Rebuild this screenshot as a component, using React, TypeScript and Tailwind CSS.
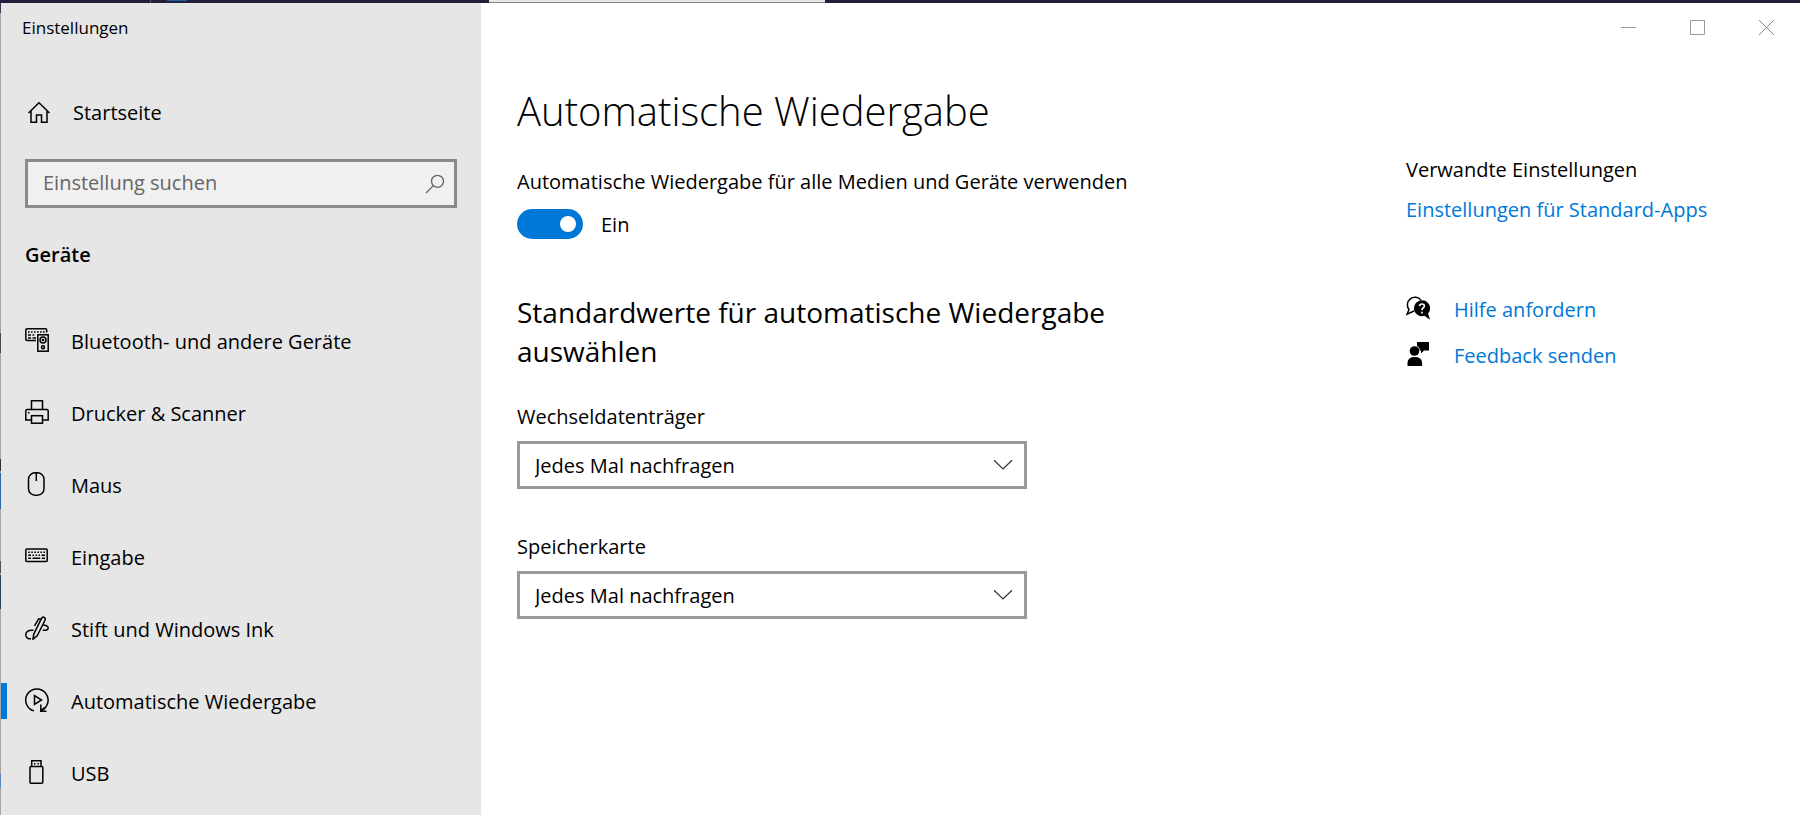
import React, { useState } from 'react';

type IconProps = { children: React.ReactNode };

const Icon: React.FC<IconProps> = ({ children }) => (
  <svg width="24" height="24" viewBox="0 0 24 24" fill="none" stroke="#000" strokeWidth="1.5" className="shrink-0" aria-hidden="true">
    {children}
  </svg>
);

const HomeIcon = () => (
  <Icon>
    <path d="M1.5 12 12 1.8 22.500 12M4 10.200V21.300H9.500V14H14.500V21.300H20V10.200" />
  </Icon>
);

const DevicesIcon = () => (
  <Icon>
    <path d="M11 12.500H2Q.8 12.500.8 11.300V2Q.8.800 2 .800H20.500Q21.700.800 21.700 2V4.500" />
    <path d="M3 4H20" strokeWidth="1.600" strokeDasharray="1.600 1.400" />
    <path d="M3 7H6M7.500 7H9.300M3 10H6M7.500 10H11" strokeWidth="1.400" />
    <rect x="12.800" y="6.800" width="10.400" height="16.400" />
    <circle cx="18" cy="12" r="3" />
    <circle cx="18" cy="12" r=".6" />
    <circle cx="18" cy="19.300" r="1.500" />
  </Icon>
);

const PrinterIcon = () => (
  <Icon>
    <path d="M6.500 9.500V.8H17.500V9.500M6.500 20H.8V11Q.8 9.600 2.200 9.600H21.800Q23.200 9.600 23.200 11V20H17.500" />
    <rect x="6.500" y="15.700" width="11" height="7.500" />
    <path d="M3 12.700H4.500" />
  </Icon>
);

const MouseIcon = () => (
  <Icon>
    <rect x="3.500" y=".8" width="15.500" height="22.400" rx="6.500" />
    <path d="M11.300 1V9" />
  </Icon>
);

const KeyboardIcon = () => (
  <Icon>
    <rect x=".8" y="5" width="21.400" height="12.500" rx="1" />
    <path d="M3.200 8.300H20" strokeWidth="1.600" strokeDasharray="1.600 1.450" />
    <path d="M3.200 11.200H6M7.500 11.200H9M10.500 11.200H12M13.500 11.200H15M16.500 11.200H20M3.200 14.200H6M7.500 14.200H15.200M16.800 14.200H20" />
  </Icon>
);

const PenIcon = () => (
  <Icon>
    <path d="M8 23.200 8.700 18.300 16.500 2.300Q17.500.6 19.200 1.400 20.900 2.300 20 4.200L12.200 19.800ZM16 3.200 13.700 2.800 9.500 9.800M8.500 14.300C3.500 13.500.8 16 .8 18.800.8 21.300 2.800 23 6 22.800M18.500 9.300C21 9 23.200 10 23.200 12 23.200 14 21 14.500 17.800 14" />
  </Icon>
);

const AutoplayIcon = () => (
  <Icon>
    <path d="M9 22.900A11.200 11.200 0 1 1 16.500 22.300" />
    <path d="M15.800 16.500V23.200H21.500M16 23 19.500 19.500" />
    <path d="M9.500 7.500V16.500L16.500 12Z" />
  </Icon>
);

const UsbIcon = () => (
  <Icon>
    <path d="M6.700 6.500V.8H16V6.500" />
    <rect x="5" y="6.500" width="12.800" height="16.700" rx="1" />
    <path d="M9 3.700H10.500M12.500 3.700H14" />
  </Icon>
);

const HelpIcon = () => (
  <Icon>
    <path d="M8.500 14.800 1 18.200 3 13.500A7.500 7.500 0 1 1 15 4.200" />
    <path d="M16 4.200A8 8 0 1 0 18.500 19.800L24 23.800 22 17.500A8 8 0 0 0 16 4.200Z" fill="#000" stroke="none" />
    <path d="M13.500 10.200Q13.700 8 16 8 18.300 8 18.300 10 18.300 11.200 17 12 16 12.700 16 14.200M16 15.800V17.600" stroke="#fff" strokeWidth="1.700" />
  </Icon>
);

const FeedbackIcon = () => (
  <Icon>
    <path d="M11 0H23V8.500H18L15 11.500V8.500H14A6 6 0 0 0 11 4ZM1.500 24V20.500Q2 15 8.800 15 15.600 15 16.100 20.500V24Z" fill="#000" stroke="none" />
    <circle cx="8.500" cy="9" r="4.800" fill="#000" stroke="none" />
  </Icon>
);

const navItems = [
  { label: 'Bluetooth- und andere Geräte', icon: <DevicesIcon /> },
  { label: 'Drucker & Scanner', icon: <PrinterIcon /> },
  { label: 'Maus', icon: <MouseIcon /> },
  { label: 'Eingabe', icon: <KeyboardIcon /> },
  { label: 'Stift und Windows Ink', icon: <PenIcon /> },
  { label: 'Automatische Wiedergabe', icon: <AutoplayIcon /> },
  { label: 'USB', icon: <UsbIcon /> },
];

const mediaOptions = ['Jedes Mal nachfragen', 'Keine Aktion durchführen', 'Ordner öffnen'];

const MediaSelect: React.FC<{ id: string; label: string }> = ({ id, label }) => (
  <div>
    <label htmlFor={id} className="block leading-7">{label}</label>
    <div className="relative mt-2.5">
      <select id={id} className="block h-12 w-full appearance-none border-3 border-[#999999] bg-white pl-[15px] pr-12 pt-0.5">
        {mediaOptions.map(option => (
          <option key={option}>{option}</option>
        ))}
      </select>
      <svg width="20" height="12" viewBox="0 0 20 12" fill="none" stroke="#333" strokeWidth="1.200" className="pointer-events-none absolute right-3.5 top-[18px]" aria-hidden="true">
        <path d="M1 1.200 10 10 19 1.200" />
      </svg>
    </div>
  </div>
);

const App: React.FC = () => {
  const [active, setActive] = useState('Automatische Wiedergabe');
  const [enabled, setEnabled] = useState(true);
  const [search, setSearch] = useState('');

  return (
    <div className="flex h-screen flex-col overflow-hidden bg-white font-['Open_Sans',sans-serif] text-[20px] text-black">
      {/* Desktop strip above the window */}
      <div className="flex h-[3px] shrink-0 bg-[#20203c]">
        <div className="ml-[150px] w-px bg-[#55556a]" />
        <div className="ml-4 h-px w-5 bg-[#1f5a9c]" />
        <div className="ml-[302px] w-[336px] border-b border-[#888888] bg-[#e6e6e6]" />
      </div>

      <div className="flex min-h-0 flex-1">
        {/* Desktop showing along the left edge */}
        <div className="flex w-px shrink-0 flex-col bg-[#a6a6a6]">
          <div className="h-2.5 bg-[#3a3a55]" />
          <div className="mt-80 h-5 bg-[#4a4642]" />
          <div className="mt-[106px] h-3 bg-[#333333]" />
          <div className="mt-0.5 h-9 bg-[#2a669f]" />
          <div className="mt-[52px] h-3 bg-[#55504c]" />
          <div className="mt-0.5 h-[34px] bg-[#26415c]" />
          <div className="mt-[165px] h-3.5 bg-[#5a85bd]" />
        </div>

        {/* Sidebar */}
        <aside className="w-[480px] shrink-0 bg-[#e6e6e6]">
          <div className="px-[21px] pt-[13px] text-[17px] leading-6">Einstellungen</div>
          <button className="mt-[51px] flex h-11 w-full items-center gap-[22px] pl-[26px]">
            <HomeIcon />
            <span>Startseite</span>
          </button>
          <div className="relative mx-6 mt-6">
            <input
              type="text"
              aria-label="Einstellung suchen"
              placeholder="Einstellung suchen"
              value={search}
              onChange={e => setSearch(e.target.value)}
              className="block h-[49px] w-full border-3 border-[#8a8a8a] bg-[#f0f0f0] pb-0.5 pl-[15px] pr-12 placeholder:text-[#666666]"
            />
            <svg width="20" height="20" viewBox="0 0 20 20" fill="none" stroke="#666" strokeWidth="1.300" className="pointer-events-none absolute right-3 top-[15px]" aria-hidden="true">
              <circle cx="12.500" cy="7.300" r="6" />
              <path d="M8.300 11.600 1 19" />
            </svg>
          </div>
          <h2 className="mt-[33px] pl-6 font-semibold leading-7">Geräte</h2>
          <nav className="mt-9">
            {navItems.map(item => (
              <button key={item.label} onClick={() => setActive(item.label)} className="relative flex h-[72px] w-full items-center gap-[22px] pl-6">
                {item.label === active && <span className="absolute left-0 h-9 w-1.5 bg-[#0078d7]" />}
                <span className="pb-0.5">{item.icon}</span>
                <span className="pt-0.5">{item.label}</span>
              </button>
            ))}
          </nav>
        </aside>

        {/* Content */}
        <div className="flex min-w-0 flex-1 flex-col">
          <div className="flex h-12 shrink-0 justify-end gap-0.5">
            <button aria-label="Minimieren" className="flex w-[67px] items-center justify-center">
              <svg width="15" height="15" stroke="#999"><path d="M0 7.500H15" /></svg>
            </button>
            <button aria-label="Maximieren" className="flex w-[67px] items-center justify-center">
              <svg width="15" height="15" stroke="#999" fill="none"><path d="M.5.500H14.500V14.500H.5Z" /></svg>
            </button>
            <button aria-label="Schließen" className="flex w-[67px] items-center justify-center">
              <svg width="15" height="15" stroke="#888"><path d="M0 0 15 15M15 0 0 15" /></svg>
            </button>
          </div>

          <div className="flex justify-between pl-9">
            <main className="w-[640px]">
              <h1 className="mt-8 text-[40px] font-light leading-[56px]">Automatische Wiedergabe</h1>
              <label htmlFor="autoplay" className="mt-[29px] block leading-7">Automatische Wiedergabe für alle Medien und Geräte verwenden</label>
              <div className="mt-[13px] flex items-center gap-[18px]">
                <span className="relative flex">
                  <input
                    id="autoplay"
                    type="checkbox"
                    role="switch"
                    checked={enabled}
                    onChange={e => setEnabled(e.target.checked)}
                    className="peer h-[30px] w-[66px] appearance-none rounded-full bg-[#999999] checked:bg-[#0078d7]"
                  />
                  <span className="pointer-events-none absolute left-[7px] top-[7px] size-4 rounded-full bg-white peer-checked:left-auto peer-checked:right-[7px]" />
                </span>
                <span className="pt-0.5 leading-7">{enabled ? 'Ein' : 'Aus'}</span>
              </div>
              <h2 className="mt-[54px] text-[28px] leading-[39px]">Standardwerte für automatische Wiedergabe auswählen</h2>
              <div className="mt-8 w-[510px] space-y-11">
                <MediaSelect id="removable" label="Wechseldatenträger" />
                <MediaSelect id="card" label="Speicherkarte" />
              </div>
            </main>

            <aside className="mt-[105px] w-[394px]">
              <h3 className="leading-7">Verwandte Einstellungen</h3>
              <a href="#apps" className="mt-3 block leading-7 text-[#0078d7]">Einstellungen für Standard-Apps</a>
              <a href="#help" className="mt-[72px] flex gap-6 leading-7 text-[#0078d7]">
                <HelpIcon />
                Hilfe anfordern
              </a>
              <a href="#feedback" className="mt-[18px] flex gap-6 leading-7 text-[#0078d7]">
                <FeedbackIcon />
                Feedback senden
              </a>
            </aside>
          </div>
        </div>
      </div>
    </div>
  );
};

export default App;
